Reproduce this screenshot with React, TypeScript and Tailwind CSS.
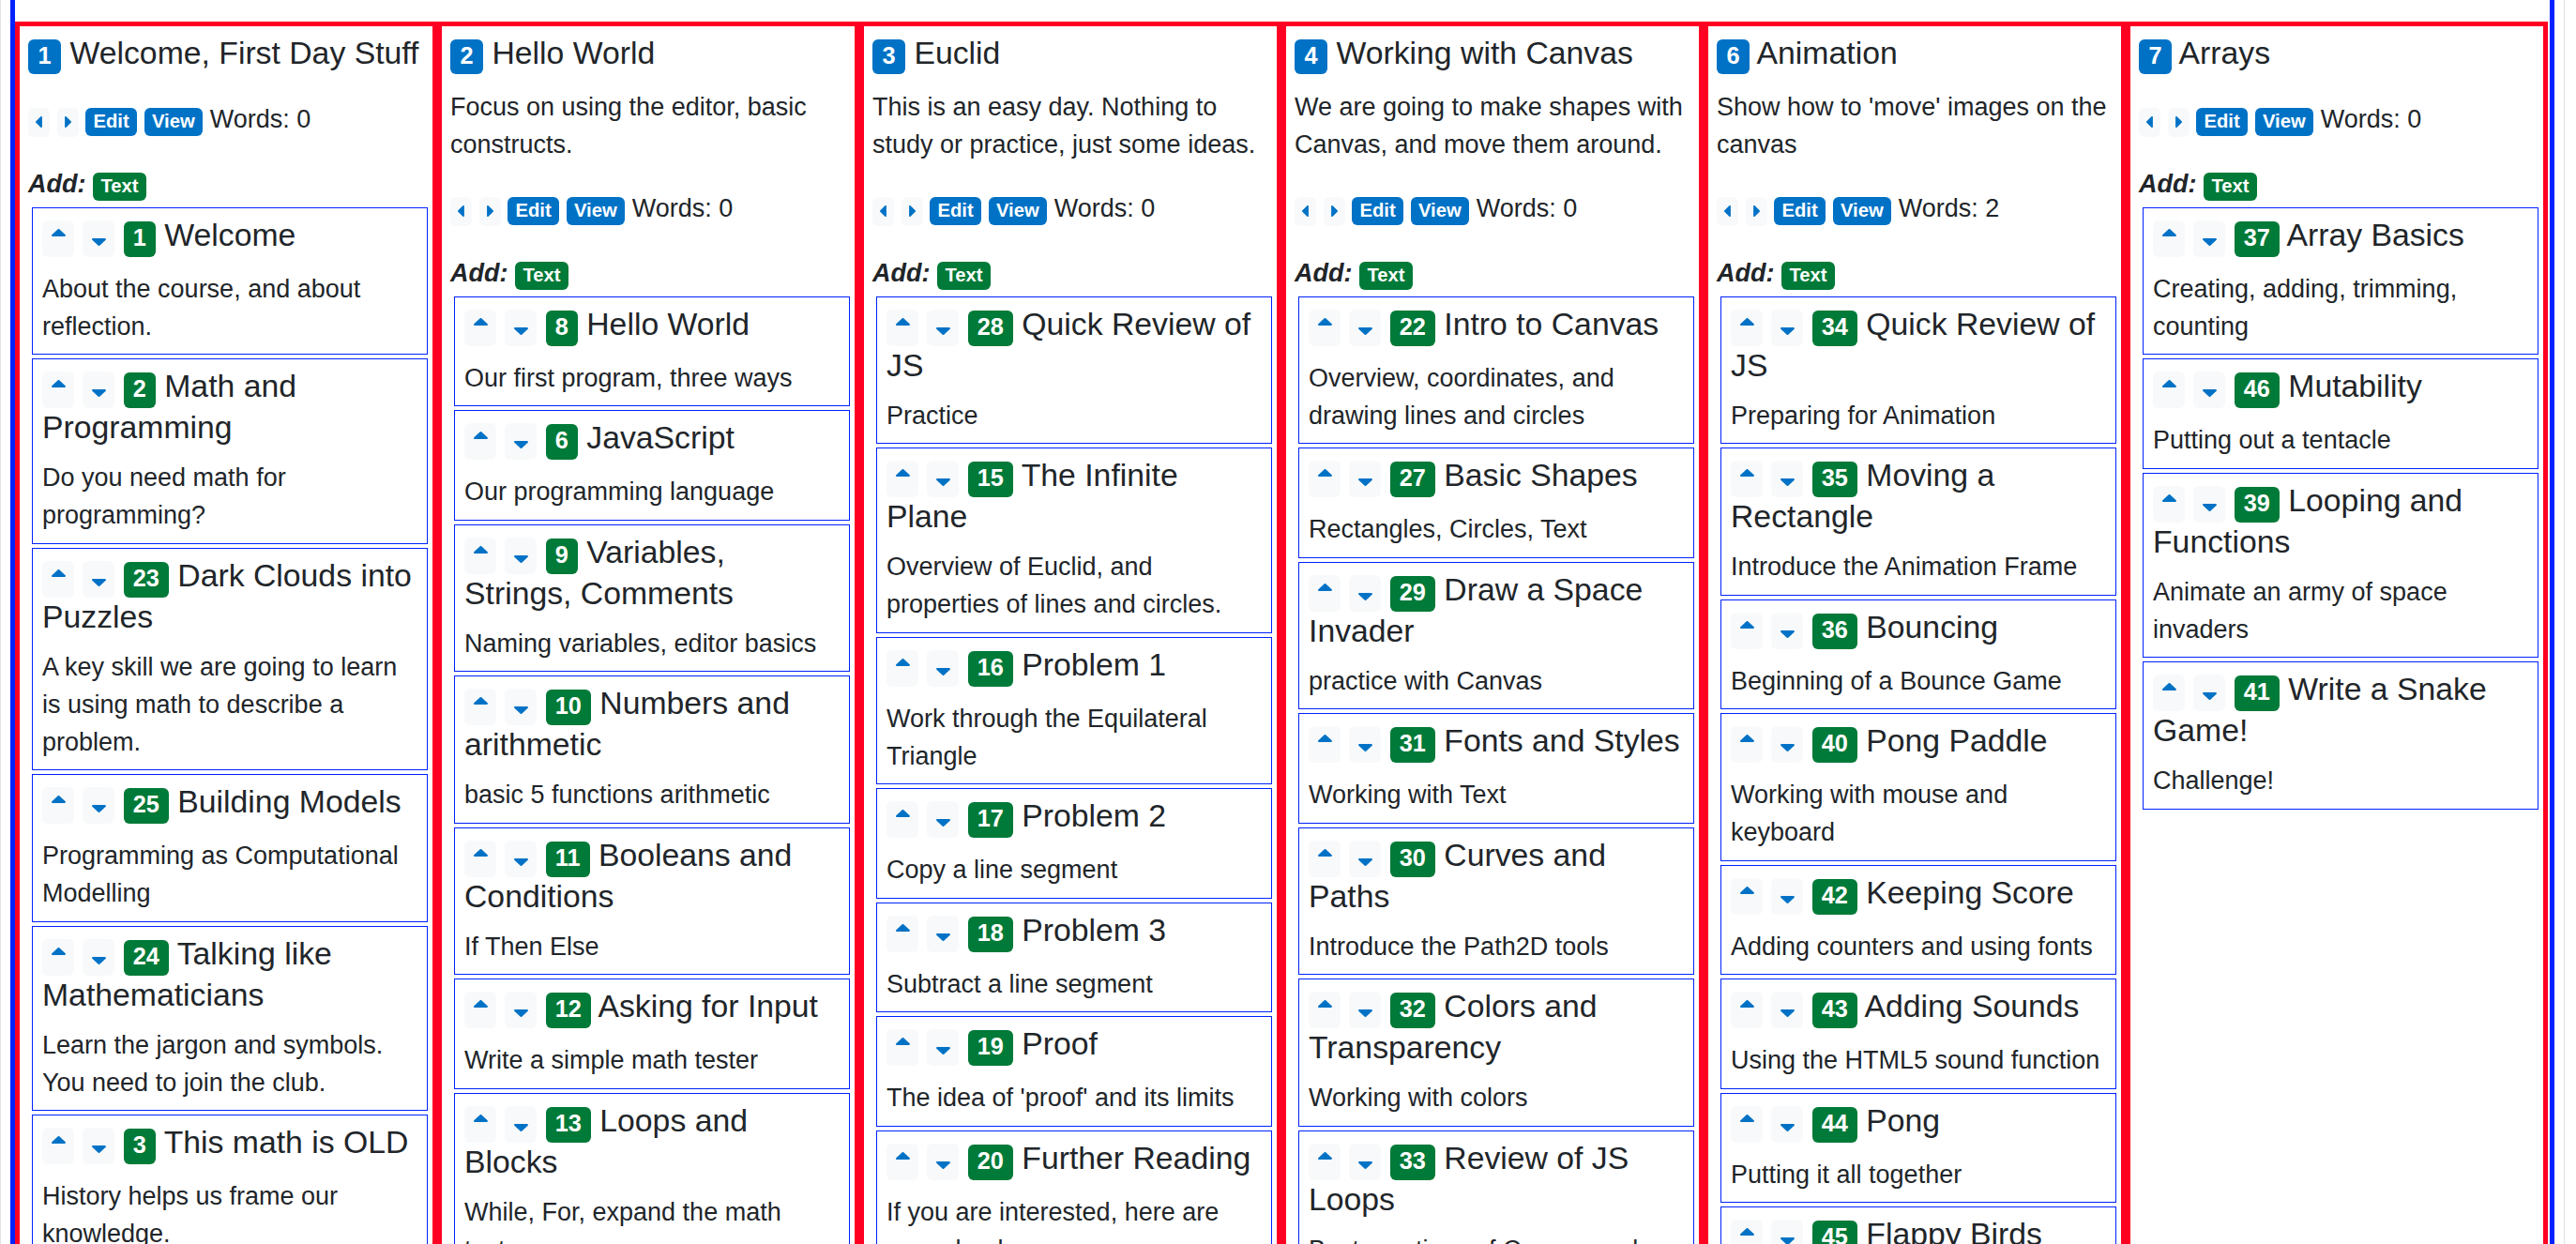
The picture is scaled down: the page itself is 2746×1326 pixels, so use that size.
import React from "react"

type Lesson = { n: number; title: string; desc: string }
type Section = { n: number; title: string; desc: string; words: number; lessons: Lesson[] }

const sections: Section[] = [
  {
    n: 1,
    title: "Welcome, First Day Stuff",
    desc: "",
    words: 0,
    lessons: [
      { n: 1, title: "Welcome", desc: "About the course, and about reflection." },
      { n: 2, title: "Math and Programming", desc: "Do you need math for programming?" },
      { n: 23, title: "Dark Clouds into Puzzles", desc: "A key skill we are going to learn is using math to describe a problem." },
      { n: 25, title: "Building Models", desc: "Programming as Computational Modelling" },
      { n: 24, title: "Talking like Mathematicians", desc: "Learn the jargon and symbols. You need to join the club." },
      { n: 3, title: "This math is OLD", desc: "History helps us frame our knowledge." },
    ],
  },
  {
    n: 2,
    title: "Hello World",
    desc: "Focus on using the editor, basic constructs.",
    words: 0,
    lessons: [
      { n: 8, title: "Hello World", desc: "Our first program, three ways" },
      { n: 6, title: "JavaScript", desc: "Our programming language" },
      { n: 9, title: "Variables, Strings, Comments", desc: "Naming variables, editor basics" },
      { n: 10, title: "Numbers and arithmetic", desc: "basic 5 functions arithmetic" },
      { n: 11, title: "Booleans and Conditions", desc: "If Then Else" },
      { n: 12, title: "Asking for Input", desc: "Write a simple math tester" },
      { n: 13, title: "Loops and Blocks", desc: "While, For, expand the math tester" },
    ],
  },
  {
    n: 3,
    title: "Euclid",
    desc: "This is an easy day. Nothing to study or practice, just some ideas.",
    words: 0,
    lessons: [
      { n: 28, title: "Quick Review of JS", desc: "Practice" },
      { n: 15, title: "The Infinite Plane", desc: "Overview of Euclid, and properties of lines and circles." },
      { n: 16, title: "Problem 1", desc: "Work through the Equilateral Triangle" },
      { n: 17, title: "Problem 2", desc: "Copy a line segment" },
      { n: 18, title: "Problem 3", desc: "Subtract a line segment" },
      { n: 19, title: "Proof", desc: "The idea of 'proof' and its limits" },
      { n: 20, title: "Further Reading", desc: "If you are interested, here are some books" },
    ],
  },
  {
    n: 4,
    title: "Working with Canvas",
    desc: "We are going to make shapes with Canvas, and move them around.",
    words: 0,
    lessons: [
      { n: 22, title: "Intro to Canvas", desc: "Overview, coordinates, and drawing lines and circles" },
      { n: 27, title: "Basic Shapes", desc: "Rectangles, Circles, Text" },
      { n: 29, title: "Draw a Space Invader", desc: "practice with Canvas" },
      { n: 31, title: "Fonts and Styles", desc: "Working with Text" },
      { n: 30, title: "Curves and Paths", desc: "Introduce the Path2D tools" },
      { n: 32, title: "Colors and Transparency", desc: "Working with colors" },
      { n: 33, title: "Review of JS Loops", desc: "Best practices of Canvas and loops" },
    ],
  },
  {
    n: 6,
    title: "Animation",
    desc: "Show how to 'move' images on the canvas",
    words: 2,
    lessons: [
      { n: 34, title: "Quick Review of JS", desc: "Preparing for Animation" },
      { n: 35, title: "Moving a Rectangle", desc: "Introduce the Animation Frame" },
      { n: 36, title: "Bouncing", desc: "Beginning of a Bounce Game" },
      { n: 40, title: "Pong Paddle", desc: "Working with mouse and keyboard" },
      { n: 42, title: "Keeping Score", desc: "Adding counters and using fonts" },
      { n: 43, title: "Adding Sounds", desc: "Using the HTML5 sound function" },
      { n: 44, title: "Pong", desc: "Putting it all together" },
      { n: 45, title: "Flappy Birds", desc: "Gravity and obstacles" },
    ],
  },
  {
    n: 7,
    title: "Arrays",
    desc: "",
    words: 0,
    lessons: [
      { n: 37, title: "Array Basics", desc: "Creating, adding, trimming, counting" },
      { n: 46, title: "Mutability", desc: "Putting out a tentacle" },
      { n: 39, title: "Looping and Functions", desc: "Animate an army of space invaders" },
      { n: 41, title: "Write a Snake Game!", desc: "Challenge!" },
    ],
  },
]

// bootstrap-icons caret paths
const CARET_UP = "m7.247 4.86-4.796 5.481c-.566.647-.106 1.659.753 1.659h9.592a1 1 0 0 0 .753-1.659l-4.796-5.48a1 1 0 0 0-1.506 0z"
const CARET_DOWN = "M7.247 11.14 2.451 5.658C1.885 5.013 2.345 4 3.204 4h9.592a1 1 0 0 1 .753 1.659l-4.796 5.48a1 1 0 0 1-1.506 0z"
const CARET_LEFT = "m3.86 8.753 5.482 4.796c.646.566 1.658.106 1.658-.753V3.204a1 1 0 0 0-1.659-.753l-5.48 4.796a1 1 0 0 0 0 1.506z"
const CARET_RIGHT = "m12.14 8.753-5.482 4.796c-.646.566-1.658.106-1.658-.753V3.204a1 1 0 0 1 1.659-.753l5.48 4.796a1 1 0 0 1 0 1.506z"

function MoveBtn({ up }: { up: boolean }) {
  return (
    <span className="inline-block align-[-11.7px] w-[34px] h-[38.7px] rounded-[6px] bg-[#f8f9fa]">
      <svg
        className={up ? "block mx-auto mt-[9px]" : "block mx-auto mt-[19px]"}
        width="15"
        height="8"
        viewBox={up ? "2.2 4.5 11.6 7.5" : "2.2 4 11.6 7.5"}
        preserveAspectRatio="none"
        fill="#0072c6"
      >
        <path d={up ? CARET_UP : CARET_DOWN} />
      </svg>
    </span>
  )
}

function NavBtn({ left }: { left: boolean }) {
  return (
    <span className="inline-block align-[-9.5px] w-[23px] h-[31px] rounded-[6px] bg-[#f8f9fa]">
      <svg
        className="block mx-auto mt-[9.5px]"
        width="7"
        height="12"
        viewBox={left ? "3.5 2.2 7.6 11.6" : "4.9 2.2 7.6 11.6"}
        preserveAspectRatio="none"
        fill="#0072c6"
      >
        <path d={left ? CARET_LEFT : CARET_RIGHT} />
      </svg>
    </span>
  )
}

function SmallBadge({ color, children }: { color: string; children: React.ReactNode }) {
  return (
    <span className={`inline-block h-[30px] pt-[4px] px-[8.4px] rounded-[6px] text-white text-[20.25px] leading-[20px] font-bold ${color}`}>
      {children}
    </span>
  )
}

function LessonCard({ lesson }: { lesson: Lesson }) {
  return (
    <div className="border border-[#0022ff] pt-[8px] pb-[9.5px] px-[10px]">
      <h5 className="text-[33.75px] leading-[40px] mb-[14px]">
        <MoveBtn up />{" "}
        <MoveBtn up={false} />{" "}
        <span className="inline-block h-[38px] pt-[5px] px-[10px] rounded-[6px] bg-[#007a38] text-white text-[25.3px] leading-[25px] font-bold">
          {lesson.n}
        </span>{" "}
        {lesson.title}
      </h5>
      <p>{lesson.desc}</p>
    </div>
  )
}

function SectionColumn({ sec }: { sec: Section }) {
  return (
    <div className="w-[450px] shrink-0 border-[5px] border-[#ff0022] pt-[8px] pl-[9px] pr-[5px]">
      <h5 className="text-[33.75px] leading-[40px] mb-[15px]">
        <span className="inline-block h-[37px] pt-[5px] px-[10.5px] rounded-[6px] bg-[#0072c6] text-white text-[25.3px] leading-[25px] font-bold">
          {sec.n}
        </span>{" "}
        {sec.title}
      </h5>
      <p className="mb-[28.4px]">{sec.desc}</p>

      <div className="mb-[29px]">
        <NavBtn left />{" "}
        <NavBtn left={false} />{" "}
        <SmallBadge color="bg-[#0072c6]">Edit</SmallBadge>{" "}
        <SmallBadge color="bg-[#0072c6]">View</SmallBadge>{" "}
        Words: {sec.words}
      </div>

      <div>
        <span className="font-bold italic">Add:</span>{" "}
        <SmallBadge color="bg-[#007a38]">Text</SmallBadge>
      </div>

      <div className="flex flex-col gap-[4px] mt-[4.5px] ml-[4px]">
        {sec.lessons.map((l) => (
          <LessonCard key={l.n} lesson={l} />
        ))}
      </div>
    </div>
  )
}

export default function App() {
  return (
    <div className="h-screen overflow-hidden bg-white font-['Liberation_Sans',Arial,sans-serif] text-[#212529] text-[27px] leading-[40px]">
      <div className="w-[2734px] border-x border-[#dee2e6] px-[10px]">
        <div className="border-x-[5px] border-[#0022ff] pt-[23px]">
          <div className="flex items-stretch">
            {sections.map((s) => (
              <SectionColumn key={s.n} sec={s} />
            ))}
          </div>
        </div>
      </div>
    </div>
  )
}
